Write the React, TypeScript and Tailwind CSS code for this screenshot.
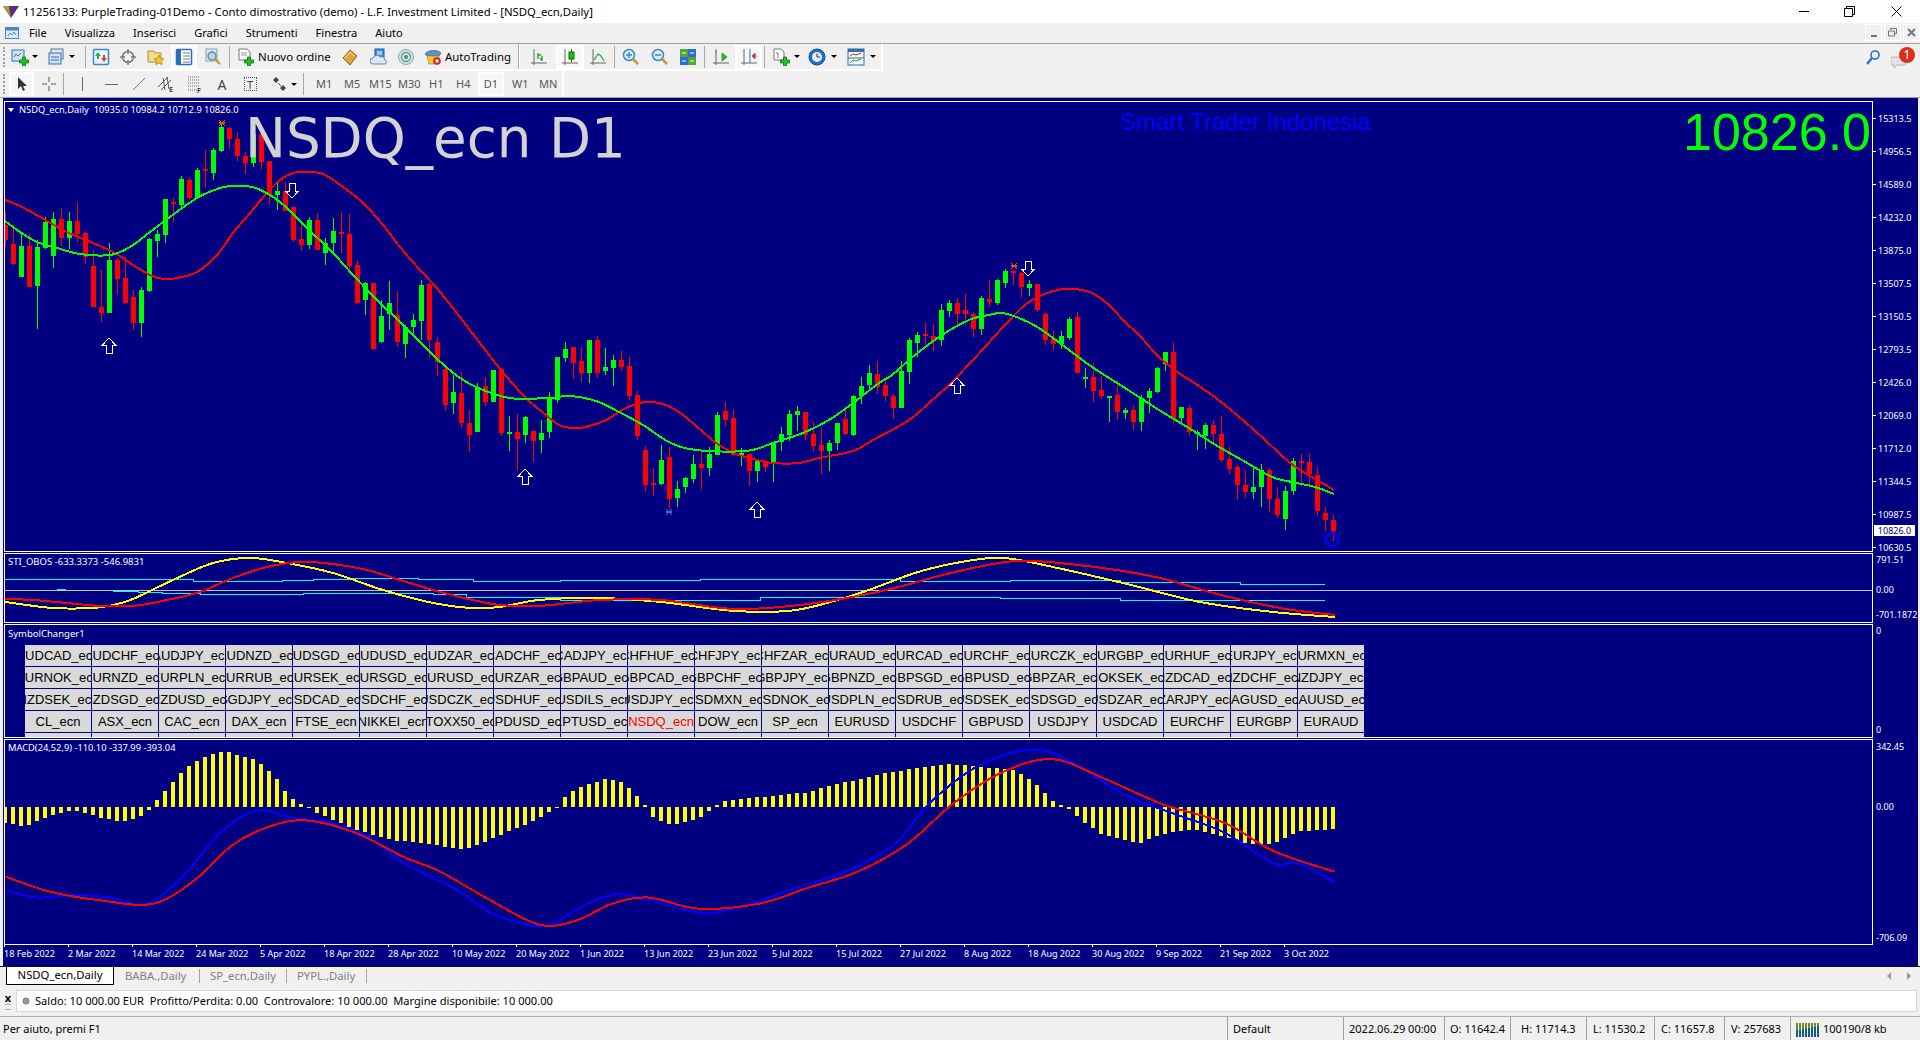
import type { ReactNode } from "react";

type Candle = [number, number, number, number, number];

// 1 = up candle, 0 = down candle; high, body top, body bottom, low
const firstCandles: Candle[] = [
    [0,335,375,420,440],[0,375,432,492,495],[1,395,438,530,530],[0,400,438,560,562],[1,420,441,557,686],[1,350,365,443,445],
    [1,335,357,467,503],[0,325,357,413,440],[1,335,363,413,445],[0,310,363,402,430],[0,395,400,472,490],[0,450,498,620,620],
    [0,510,621,638,665],[1,430,480,638,640],[0,475,480,537,585],[0,470,533,608,610],[0,570,591,670,690],[1,560,570,670,710],
    [1,415,417,573,578],[1,390,402,423,470],[1,297,297,404,428],[0,290,306,311,365],[1,228,237,315,325],[0,232,240,295,300],
    [1,205,210,295,295],[0,150,208,215,265],[1,145,150,218,240],[1,70,80,153,158],[0,80,84,116,145],[0,97,118,170,185],
    [0,155,168,189,220],[1,95,101,189,200],[0,95,101,185,205],[0,183,183,285,315],[1,245,273,285,330],[0,245,273,333,333],
    [0,320,322,420,425],[0,370,418,435,455],[1,350,361,435,445],[0,340,360,450,452],[1,415,430,461,495],[1,355,394,430,465],
    [0,337,397,401,460],[0,343,403,500,510],[0,480,495,608,612],[1,545,550,600,645],[0,548,550,747,750],[1,600,648,725,730],
    [1,543,610,643,690],[0,573,645,725,740],[1,675,680,732,775],[1,643,660,680,710],[1,540,555,663,720],[0,545,553,722,770],
];

const middleCandles: Candle[] = [
    [0,200,215,275,318],[0,285,297,405,422],[1,315,366,399,432],[0,307,369,459,476],[0,420,459,495,545],[1,340,354,486,486],
    [0,322,348,396,408],[1,300,300,396,396],[0,295,297,489,498],[1,438,486,489,543],[0,432,486,507,600],[1,438,441,495,519],
    [0,483,483,513,576],[1,450,489,510,549],[1,365,387,486,504],[1,261,261,390,399],[1,216,237,264,276],[0,231,231,279,327],
    [0,231,273,309,336],[1,210,210,309,339],[0,198,210,309,324],[1,234,291,303,315],[1,255,270,294,348],[0,243,270,291,303],
    [0,259,288,378,390],[0,364,375,498,510],[0,528,540,645,666],[0,594,639,645,678],[1,525,570,642,645],[0,531,561,687,720],
    [1,633,657,684,711],[1,621,624,651,669],[1,555,582,627,639],[0,540,582,594,657],[1,531,552,594,618],[1,426,435,555,555],
    [0,396,423,450,471],[0,417,444,555,558],[1,534,549,555,588],[0,549,552,603,648],[1,566,570,603,636],[0,570,573,591,606],
    [1,516,519,582,636],[1,471,492,516,543],[1,420,432,495,513],[1,408,423,435,483],[0,426,426,495,510],[0,456,492,528,546],
    [0,474,525,543,612],[1,510,519,543,603],[1,459,459,519,540],[0,414,447,492,495],[1,375,378,495,498],[1,321,348,378,402],
    [1,285,309,345,363],[0,273,312,351,372],[0,330,345,378,393],[0,372,378,414,447],[1,273,303,414,414],
];

const lastCandles: Candle[] = [
    [1,265,270,366,402],[1,247,255,279,321],[0,219,252,258,288],[0,222,258,273,303],[1,162,180,270,288],[1,150,159,183,201],
    [0,144,159,192,225],[0,132,180,192,222],[0,186,192,237,261],[1,138,144,237,255],[0,90,147,156,171],[1,87,90,159,165],
    [1,57,63,99,114],[0,60,63,69,105],[0,66,69,111,141],[1,90,102,114,138],[0,102,102,180,186],[0,186,192,270,285],
    [0,243,264,282,300],[1,243,258,282,297],[1,201,207,264,270],[0,186,201,369,369],[1,354,381,387,414],[0,339,381,423,456],
    [0,378,420,438,447],[1,438,438,441,516],[0,393,435,486,510],[1,474,480,489,507],[0,465,480,516,540],[1,435,444,516,543],
    [1,414,423,444,489],[1,351,354,426,429],[1,306,306,342,363],[0,279,306,507,519],[1,471,471,504,516],[0,465,474,546,558],
    [1,540,546,552,600],[1,519,525,558,597],[0,510,525,552,585],[0,498,552,630,636],[0,591,627,657,672],[0,645,651,705,750],
    [0,660,705,726,741],[1,654,711,726,747],[1,642,660,711,771],[0,654,660,747,786],[0,711,747,795,804],[1,708,723,807,840],
    [1,624,633,723,735],[0,612,633,639,708],[0,609,636,672,711],[0,651,675,783,798],[0,771,789,810,843],[0,795,810,843,873],
];

const toPage = (list: Candle[], offset: number): Candle[] =>
    list.map(([up, hi, top, bottom, lo]) => [up, offset + hi / 3, offset + top / 3, offset + bottom / 3, offset + lo / 3]);

const candles = [...toPage(firstCandles, 100), ...toPage(middleCandles, 270), ...toPage(lastCandles, 250)];

const slowMa = [5,200,20,206,40,217,67,232,93,243,115,253,133,265,150,275,163,279,177,278,197,272,217,255,233,233,250,213,267,193,280,180,293,173,307,172,323,174,343,187,363,203,383,225,400,247,420,270,436,287,456,312,476,338,501,370,526,398,546,415,559,425,573,428,586,427,606,420,626,408,646,402,666,405,683,415,703,432,719,445,736,454,753,459,773,463,799,463,819,458,853,451,873,440,892,430,912,418,929,403,952,382,985,347,1005,325,1025,305,1042,295,1062,289,1075,289,1092,293,1109,305,1125,322,1139,335,1159,357,1179,373,1202,388,1225,405,1245,422,1265,440,1289,462,1305,473,1334,490];
const fastMa = [5,221,20,232,37,242,57,248,80,254,110,255,130,247,150,232,170,217,197,198,220,188,233,186,252,187,270,195,287,208,307,228,333,253,353,275,377,300,400,322,423,345,436,358,456,375,476,387,509,398,549,398,569,396,596,401,619,412,643,425,669,442,696,450,746,451,773,443,803,433,829,420,853,403,879,383,892,375,915,355,942,335,969,320,989,315,1002,313,1019,318,1039,328,1065,347,1092,367,1125,388,1159,410,1192,430,1219,447,1242,460,1272,477,1292,482,1315,487,1334,494];

const stiYellow = [5,602,53,608,93,608,113,605,133,599,173,580,213,563,250,558,287,563,333,573,383,590,433,603,470,608,500,607,539,600,600,598,661,602,735,611,796,610,857,594,918,572,967,561,1004,558,1053,567,1127,584,1200,602,1273,612,1335,617];
const stiRed = [5,599,33,600,67,603,100,606,133,606,167,600,200,592,233,578,267,567,300,562,333,564,367,570,400,580,440,592,473,600,500,605,539,606,600,600,661,600,735,609,808,604,882,591,955,572,1016,561,1078,565,1151,576,1225,596,1286,609,1335,615];

// macd lines were read off the shrunk picture, so they get scaled up
const scale = (pts: number[]) => pts.map((v) => v * 1.2245);
const macdBlue = scale([5,727,30,733,60,731,90,733,120,738,150,715,180,680,210,662,240,668,270,672,300,683,330,705,370,725,400,745,430,755,450,755,480,738,505,730,530,735,570,745,600,742,650,725,690,712,730,690,760,655,800,625,845,612,880,625,920,650,960,665,1000,680,1040,705,1060,705,1090,720]);
const macdRed = scale([5,716,40,728,80,735,125,738,160,718,190,690,220,675,250,670,290,680,330,700,360,712,400,735,440,755,470,752,500,738,530,733,570,742,620,738,660,725,700,712,740,690,780,655,820,630,860,620,900,635,950,657,1000,672,1040,695,1090,712]);

const macdKeys = [[5,-13],[20,-16],[40,-8],[60,-2],[80,-8],[100,-12],[115,-8],[125,0],[130,8],[140,18],[150,30],[160,37],[170,42],[185,46],[195,42],[210,38],[225,25],[235,10],[245,3],[260,-5],[290,-18],[320,-27],[350,-30],[380,-35],[400,-27],[420,-18],[440,-10],[455,0],[465,12],[480,18],[495,23],[510,20],[525,5],[535,-10],[550,-15],[570,-10],[590,5],[620,8],[640,10],[660,12],[680,18],[700,22],[720,27],[750,32],[775,35],[800,33],[830,30],[845,20],[860,5],[875,-2],[885,-12],[900,-22],[930,-30],[950,-22],[975,-18],[1000,-24],[1020,-30],[1040,-30],[1060,-20],[1090,-18]];

function macdAt(x: number) {
    for (let k = 1; k < macdKeys.length; k++) {
        if (x <= macdKeys[k][0]) {
            const [x0, y0] = macdKeys[k - 1];
            const [x1, y1] = macdKeys[k];
            return y0 + ((y1 - y0) * Math.max(0, x - x0)) / (x1 - x0);
        }
    }
    return -18;
}

// catmull-rom through flat x,y pairs
function smooth(p: number[]) {
    let d = `M${p[0]} ${p[1]}`;
    for (let i = 0; i < p.length - 2; i += 2) {
        const x0 = i ? p[i - 2] : p[i];
        const y0 = i ? p[i - 1] : p[i + 1];
        const x3 = i + 4 < p.length ? p[i + 4] : p[i + 2];
        const y3 = i + 4 < p.length ? p[i + 5] : p[i + 3];
        d += `C${p[i] + (p[i + 2] - x0) / 6} ${p[i + 1] + (p[i + 3] - y0) / 6} ${p[i + 2] - (x3 - p[i]) / 6} ${p[i + 3] - (y3 - p[i + 1]) / 6} ${p[i + 2]} ${p[i + 3]}`;
    }
    return d;
}

const row1 = ["AUDCAD","AUDCHF","AUDJPY","AUDNZD","AUDSGD","AUDUSD","AUDZAR","CADCHF","CADJPY","CHFHUF","CHFJPY","CHFZAR","EURAUD","EURCAD","EURCHF","EURCZK","EURGBP","EURHUF","EURJPY","EURMXN"];
const row2 = ["EURNOK","EURNZD","EURPLN","EURRUB","EURSEK","EURSGD","EURUSD","EURZAR","GBPAUD","GBPCAD","GBPCHF","GBPJPY","GBPNZD","GBPSGD","GBPUSD","GBPZAR","NOKSEK","NZDCAD","NZDCHF","NZDJPY"];
const row3 = ["NZDSEK","NZDSGD","NZDUSD","SGDJPY","USDCAD","USDCHF","USDCZK","USDHUF","USDILS","USDJPY","USDMXN","USDNOK","USDPLN","USDRUB","USDSEK","USDSGD","USDZAR","ZARJPY","XAGUSD","XAUUSD"];
const row4 = ["CL_ecn","ASX_ecn","CAC_ecn","DAX_ecn","FTSE_ecn","NIKKEI_ecn","STOXX50_ecn","XPDUSD_ecn","XPTUSD_ecn","NSDQ_ecn","DOW_ecn","SP_ecn","EURUSD","USDCHF","GBPUSD","USDJPY","USDCAD","EURCHF","EURGBP","EURAUD"];
const symbols = [...row1, ...row2, ...row3].map((s) => `${s}_ecn`).concat(row4);

const prices = ["15313.5","14956.5","14589.0","14232.0","13875.0","13507.5","13150.5","12793.5","12426.0","12069.0","11712.0","11344.5","10987.5","10630.5"];
const dates = ["18 Feb 2022","2 Mar 2022","14 Mar 2022","24 Mar 2022","5 Apr 2022","18 Apr 2022","28 Apr 2022","10 May 2022","20 May 2022","1 Jun 2022","13 Jun 2022","23 Jun 2022","5 Jul 2022","15 Jul 2022","27 Jul 2022","8 Aug 2022","18 Aug 2022","30 Aug 2022","9 Sep 2022","21 Sep 2022","3 Oct 2022"];

const Plus = ({ x = 9, y = 9 }: { x?: number; y?: number }) => (
    <path d={`M${x + 2.5} ${y}h3v3h3v3h-3v3h-3v-3h-3v-3h3z`} fill="#22c322" stroke="#0b6b12" strokeWidth="0.8" />
);

const Icon = ({ children }: { children: ReactNode }) => (
    <svg width="18" height="18" viewBox="0 0 18 18" className="shrink-0">{children}</svg>
);

const Dropdown = () => (
    <div className="flex w-[8px] justify-center">
        <div className="h-0 w-0 border-x-[3px] border-t-[3px] border-x-transparent border-t-black" />
    </div>
);

const Sep = () => <div className="mx-[2px] h-[22px] w-px shrink-0 bg-[#a8a8a8]" />;

const Btn = ({ className, active, children }: { className: string; active?: boolean; children: ReactNode }) => (
    <div className={`flex h-[24px] shrink-0 items-center justify-center ${active ? "border-2 border-white bg-[#f7f7f7]" : ""} ${className}`}>
        {children}
    </div>
);

const Grip = () => (
    <div className="mx-[3px] h-[20px] w-[2px] shrink-0 border-l-2 border-dotted border-[#a0a0a0]" />
);

const UpArrow = ({ x, y }: { x: number; y: number }) => (
    <path d={`M${x} ${y}l6.5 7h-3.5v8h-6v-8h-3.5z`} fill="#000080" stroke="#fff" strokeWidth="1" />
);

const DownArrow = ({ x, y }: { x: number; y: number }) => (
    <path d={`M${x} ${y}l6.5 -7h-3.5v-8h-6v8h-3.5z`} fill="#000080" stroke="#fff" strokeWidth="1" />
);

const Cross = ({ x, y, color }: { x: number; y: number; color: string }) => (
    <path d={`M${x - 3} ${y - 3}l6 6M${x + 3} ${y - 3}l-6 6M${x - 3} ${y}h6`} stroke={color} strokeWidth="1.2" fill="none" />
);

const MainChart = () => (
    <svg viewBox="5 102 1867 449" className="absolute inset-0 h-full w-full" shapeRendering="crispEdges">
        {candles.map(([up, hi, top, bottom, lo], i) => {
            const color = up ? "#00ff00" : "#ff0000";
            const left = 3 + 8 * i;
            return (
                <g key={i} fill={color}>
                    <rect x={left + 2} y={Math.round(hi)} width="1" height={Math.round(lo - hi)} />
                    <rect x={left} y={Math.round(top)} width="5" height={Math.max(2, Math.round(bottom - top))} />
                </g>
            );
        })}
        <path d={smooth(slowMa)} fill="none" stroke="#ff0000" strokeWidth="2" />
        <path d={smooth(fastMa)} fill="none" stroke="#00ff00" strokeWidth="2" />
        <UpArrow x={109} y={338} />
        <UpArrow x={525} y={469} />
        <UpArrow x={757} y={502} />
        <UpArrow x={957} y={378} />
        <DownArrow x={292} y={198} />
        <DownArrow x={1028} y={276} />
        <Cross x={222} y={123} color="#ff4500" />
        <Cross x={669} y={512} color="#4169e1" />
        <Cross x={1014} y={266} color="#ff4500" />
        <circle cx="1332" cy="540" r="6.5" fill="none" stroke="#0000ff" strokeWidth="2" />
        <circle cx="1332" cy="540" r="1.5" fill="#0000ff" />
    </svg>
);

const StiChart = () => (
    <svg viewBox="5 554 1867 68" className="absolute inset-0 h-full w-full" shapeRendering="crispEdges">
        <path d="M5 590H1872" stroke="#c0c0c0" strokeWidth="1" />
        <path d="M5 579H193V581H282V580H313V579H353V578H418V579H473V581H560V580H700V579H900V581H1010V580H1120V582H1240V584H1325" fill="none" stroke="#00ffff" strokeWidth="1" />
        <path d="M113 591H138V592H162V593H200V594H303V593H433V594H466V597H560V600H760V597H1000V598H1120V600H1325" fill="none" stroke="#00ffff" strokeWidth="1" />
        <path d="M57 589H66" stroke="#00ffff" strokeWidth="1" />
        <path d={smooth(stiYellow)} fill="none" stroke="#ffff00" strokeWidth="2" />
        <path d={smooth(stiRed)} fill="none" stroke="#ff0000" strokeWidth="2" />
    </svg>
);

const MacdChart = () => (
    <svg viewBox="5 740 1867 204" className="absolute inset-0 h-full w-full" shapeRendering="crispEdges">
        {candles.map((_, i) => {
            const left = 3 + 8 * i;
            const h = Math.round(macdAt((left + 2.5) / 1.2245) * 1.2245);
            return <rect key={i} x={left} y={h > 0 ? 807 - h : 807} width="4" height={Math.max(1, Math.abs(h))} fill="#ffff00" />;
        })}
        <path d={smooth(macdBlue)} fill="none" stroke="#0000ff" strokeWidth="2" />
        <path d={smooth(macdRed)} fill="none" stroke="#ff0000" strokeWidth="2" />
    </svg>
);

const Toolbars = () => (
    <div className="h-[53px] bg-[#f0f0f0] text-[11.4px] text-black">
        <div className="flex h-[27px] w-[883px] items-center border-r-2 border-b-2 border-white">
            <Grip />
            <Btn className="ml-px w-[22px]">
                <Icon><rect x="1" y="2" width="12" height="11" fill="#cfe3f7" stroke="#3b6ea8" /><path d="M3 9l2-3 2 2 3-3" fill="none" stroke="#3b6ea8" /><Plus /></Icon>
            </Btn>
            <Dropdown />
            <Btn className="ml-[7px] w-[22px]">
                <Icon><rect x="3" y="1" width="12" height="10" fill="#dbe8f6" stroke="#52709a" /><rect x="1" y="5" width="12" height="11" fill="#cfe0f4" stroke="#3b6ea8" /><path d="M3 9h8M3 12h8" stroke="#3b6ea8" /></Icon>
            </Btn>
            <Dropdown />
            <div className="ml-[7px]"><Sep /></div>
            <Btn className="w-[26px]">
                <Icon><rect x="1.5" y="1.5" width="15" height="15" rx="1" fill="#eef5fb" stroke="#3d86c6" strokeWidth="1.5" /><path d="M6 4l3 4H7v3H5V8H3z" fill="#22b14c" /><path d="M12 14l-3-4h2V7h2v3h2z" fill="#e0442a" /></Icon>
            </Btn>
            <Btn className="w-[28px]">
                <Icon><circle cx="9" cy="9" r="5.5" fill="none" stroke="#777" strokeWidth="1.5" /><path d="M9 1v5M9 12v5M1 9h5M12 9h5" stroke="#777" strokeWidth="1.4" /></Icon>
            </Btn>
            <Btn className="w-[28px]">
                <Icon><path d="M1 3h6l1 2h6v9H1z" fill="#f5dc8c" stroke="#a98a3a" /><path d="M12 7l1.7 3.4 3.3.5-2.5 2.3.6 3.5-3.1-1.7-3.1 1.7.6-3.5L7 10.900l3.300-.5z" fill="#f3c623" stroke="#a07a10" strokeWidth="0.7" /></Icon>
            </Btn>
            <Btn className="mx-px w-[26px]" active>
                <Icon><rect x="1.500" y="1.500" width="15" height="15" rx="1" fill="#fff" stroke="#2a6fb4" strokeWidth="1.500" /><rect x="2" y="2" width="4" height="14" fill="#2a6fb4" /><path d="M8 5h7M8 8h7M8 11h7M8 14h7" stroke="#6a7a8c" /></Icon>
            </Btn>
            <Btn className="w-[29px]">
                <Icon><rect x="2" y="1" width="11" height="12" fill="#dce6f2" stroke="#8a9bb3" /><circle cx="8" cy="8" r="4" fill="#b8d3ea" stroke="#5d7fa5" strokeWidth="1.300" /><path d="M11 11l5 5" stroke="#c49a2c" strokeWidth="2.200" /></Icon>
            </Btn>
            <Sep />
            <div className="ml-[4px] flex h-[24px] w-[95px] shrink-0 items-center gap-[4px]">
                <Icon><path d="M3 1h8l3 3v8H3z" fill="#fff" stroke="#777" /><path d="M5 5h6M5 7h6" stroke="#999" /><Plus /></Icon>
                <span className="whitespace-nowrap">Nuovo ordine</span>
            </div>
            <Btn className="ml-[5px] w-[28px]">
                <Icon><path d="M2 10l7-8 7 6-7 9z" fill="#d9a441" stroke="#8c6414" /><path d="M4 10l5-6 4 4" fill="none" stroke="#f4dc9a" /></Icon>
            </Btn>
            <Btn className="ml-px w-[28px]">
                <Icon><rect x="5" y="1" width="9" height="10" fill="#3f8fd8" stroke="#1f5d9e" /><path d="M7 4h5M7 6h5" stroke="#fff" /><path d="M3 16a3 3 0 010-6 4 4 0 017-1 3.500 3.500 0 015 3 2 2 0 01-1 4z" fill="#dbe7f3" stroke="#6b86a3" /></Icon>
            </Btn>
            <Btn className="w-[26px]">
                <Icon><circle cx="9" cy="9" r="7.500" fill="#cfe5e2" stroke="#8aa7b5" /><circle cx="9" cy="9" r="4.500" fill="none" stroke="#5d9c9a" strokeWidth="1.300" /><circle cx="9" cy="9" r="2" fill="#3aa24a" /></Icon>
            </Btn>
            <div className="ml-[5px] flex h-[24px] w-[92px] shrink-0 items-center gap-[3px]">
                <Icon><path d="M1 6c2-4 13-5 16-1l-2 3H3z" fill="#5f8fc4" stroke="#345f8f" strokeWidth="0.700" /><path d="M3 8h12l-1 8H5z" fill="#f0c53a" stroke="#a98a1a" strokeWidth="0.700" /><circle cx="13" cy="13" r="3.800" fill="#d81e1e" /><rect x="11.500" y="11.500" width="3" height="3" fill="#fff" /></Icon>
                <span className="whitespace-nowrap">AutoTrading</span>
            </div>
            <div className="ml-[2px] mr-[2px] h-[25px] w-[2px] shrink-0 border-l border-[#a8a8a8] bg-white" />
            <Btn className="ml-[3px] w-[28px]">
                <Icon><path d="M4 1v16M1 15h16" stroke="#666" /><path d="M8 11V5M8 7h3M12 13V8M10 11h2" stroke="#12a12a" strokeWidth="1.300" /></Icon>
            </Btn>
            <Btn className="ml-[3px] w-[28px]" active>
                <Icon><path d="M4 1v16M1 15h16" stroke="#666" /><rect x="8" y="4" width="5" height="7" fill="#14c414" stroke="#0a700a" /><path d="M10.500 1v3M10.500 11v3" stroke="#0a700a" /></Icon>
            </Btn>
            <Btn className="w-[28px]">
                <Icon><path d="M4 1v16M1 15h16" stroke="#666" /><path d="M5 12l4-6 3 2 3 5" fill="none" stroke="#14a14a" strokeWidth="1.200" /></Icon>
            </Btn>
            <Sep />
            <Btn className="w-[28px]">
                <Icon><circle cx="7" cy="7" r="5.500" fill="#d8ecfa" stroke="#3d86c6" strokeWidth="1.500" /><path d="M4 7h6M7 4v6" stroke="#3d86c6" strokeWidth="1.500" /><path d="M11 11l5 5" stroke="#c49a2c" strokeWidth="2.500" /></Icon>
            </Btn>
            <Btn className="ml-px w-[28px]">
                <Icon><circle cx="7" cy="7" r="5.500" fill="#d8ecfa" stroke="#3d86c6" strokeWidth="1.500" /><path d="M4 7h6" stroke="#3d86c6" strokeWidth="1.500" /><path d="M11 11l5 5" stroke="#c49a2c" strokeWidth="2.500" /></Icon>
            </Btn>
            <Btn className="w-[28px]">
                <Icon><rect x="1" y="1" width="8" height="8" fill="#4ea72e" /><rect x="9" y="1" width="8" height="8" fill="#2f6ed1" /><rect x="1" y="9" width="8" height="8" fill="#2f6ed1" /><rect x="9" y="9" width="8" height="8" fill="#4ea72e" /><path d="M3 5h4M11 5h4M3 13h4M11 13h4" stroke="#fff" /></Icon>
            </Btn>
            <Sep />
            <Btn className="w-[28px]">
                <Icon><path d="M4 1v16M1 15h16" stroke="#666" /><path d="M4 3v2M10 5l5 4-5 4z" fill="#22c322" stroke="#0b6b12" strokeWidth="0.600" /></Icon>
            </Btn>
            <Btn className="w-[27px]" active>
                <Icon><path d="M4 1v16M1 15h16" stroke="#666" /><path d="M10 1v14" stroke="#2a6fb4" /><path d="M17 8h-5M12 8l3-3v6z" fill="#c0392b" stroke="#c0392b" strokeWidth="0.800" /></Icon>
            </Btn>
            <Sep />
            <Btn className="ml-[2px] w-[24px]">
                <Icon><path d="M2 1h7l3 3v8H2z" fill="#fff" stroke="#777" /><path d="M4 5h2v5" fill="none" stroke="#777" /><Plus /></Icon>
            </Btn>
            <Dropdown />
            <Btn className="ml-[3px] w-[26px]">
                <Icon><circle cx="9" cy="9" r="8" fill="#1a73c8" stroke="#0d4f91" /><circle cx="9" cy="9" r="5" fill="#e8eef4" /><path d="M9 5.500V9h3" fill="none" stroke="#334" /></Icon>
            </Btn>
            <Dropdown />
            <Btn className="ml-[5px] w-[26px]">
                <Icon><rect x="1" y="1" width="16" height="16" fill="#f4f8fb" stroke="#2f6ea8" /><rect x="1" y="1" width="16" height="3" fill="#2f6ea8" /><path d="M3 8l3-2 3 1 5-2" fill="none" stroke="#b5341f" /><path d="M1 10h16" stroke="#2f6ea8" /><path d="M3 15l3-3 3 1 5-2" fill="none" stroke="#2c8f3c" /></Icon>
            </Btn>
            <Dropdown />
        </div>
        <div className="flex h-[26px] items-center">
            <div className="flex h-full w-[564px] shrink-0 items-center border-r-2 border-white text-[11px] text-[#555]">
                <Grip />
                <Btn className="ml-px w-[25px]" active>
                    <svg width="12" height="16" viewBox="0 0 12 16"><path d="M2 1v12l3-3 2 5 2-1-2-4h4z" fill="#333" /></svg>
                </Btn>
                <Btn className="ml-[3px] w-[24px]">
                    <svg width="16" height="16" viewBox="0 0 16 16"><path d="M8 1v5M8 10v5M1 8h5M10 8h5" stroke="#555" /></svg>
                </Btn>
                <Sep />
                <Btn className="ml-[2px] w-[28px]"><div className="h-[14px] w-px bg-[#666]" /></Btn>
                <Btn className="ml-[5px] w-[20px]"><div className="h-px w-[13px] bg-[#666]" /></Btn>
                <Btn className="ml-[8px] w-[20px]">
                    <svg width="14" height="14" viewBox="0 0 14 14"><path d="M1 13L13 1" stroke="#777" /></svg>
                </Btn>
                <Btn className="ml-[6px] w-[22px]">
                    <svg width="18" height="18" viewBox="0 0 18 18"><path d="M1 12L11 2M4 15L14 5M6 3l2 12M10 2l2 12" stroke="#555" fill="none" /><text x="12" y="17" fontSize="7" fontWeight="700" fill="#444">E</text></svg>
                </Btn>
                <Btn className="ml-[8px] w-[20px]">
                    <svg width="16" height="18" viewBox="0 0 16 18"><path d="M1 2h12M1 5h12M1 8h12M1 11h12M1 15h9" stroke="#666" strokeDasharray="1 1" /><text x="10" y="18" fontSize="7" fontWeight="700" fill="#444">F</text></svg>
                </Btn>
                <Btn className="ml-[6px] w-[22px]"><span className="text-[14px] text-[#444]">A</span></Btn>
                <Btn className="ml-[6px] w-[22px]">
                    <div className="flex h-[14px] w-[13px] items-center justify-center border border-dotted border-[#555] text-[11px] leading-none text-[#444]">T</div>
                </Btn>
                <Btn className="ml-[7px] w-[22px]">
                    <svg width="16" height="16" viewBox="0 0 16 16"><path d="M5 1l3 3-3 3-3-3zM12 9l3 3-3 3-3-3z" fill="#444" /><path d="M7 7l3 3" stroke="#444" /></svg>
                </Btn>
                <Dropdown />
                <div className="ml-[3px]"><Sep /></div>
                <div className="ml-[10px] w-[28px] shrink-0">M1</div>
                <div className="w-[25px] shrink-0">M5</div>
                <div className="w-[29px] shrink-0">M15</div>
                <div className="w-[31px] shrink-0">M30</div>
                <div className="w-[27px] shrink-0">H1</div>
                <div className="w-[22px] shrink-0">H4</div>
                <Btn className="w-[26px]" active>D1</Btn>
                <div className="ml-[8px] w-[27px] shrink-0">W1</div>
                <div className="shrink-0">MN</div>
            </div>
        </div>
    </div>
);

const SymbolGrid = () => (
    <div className="ml-[20px] mt-[8px] grid grid-cols-[repeat(20,67px)] auto-rows-[22px] font-['Liberation_Sans',sans-serif] text-[13px] text-black">
        {symbols.map((s) => (
            <button
                key={s}
                className={`flex items-center justify-center overflow-hidden whitespace-nowrap border-r border-b border-[#000080] bg-[#d9d9d9] ${s === "NSDQ_ecn" ? "text-[#ff0000]" : ""}`}
            >
                <span className="shrink-0">{s}</span>
            </button>
        ))}
        {row1.map((s) => <div key={s} className="border-r border-[#000080] bg-[#d9d9d9]" />)}
    </div>
);

const Tick = () => <div className="h-px w-[3px] shrink-0 bg-white" />;

export default function App() {
    return (
        <div className="flex h-[1040px] w-[1920px] flex-col overflow-hidden bg-[#f0f0f0] font-['Noto_Sans',sans-serif]">
            {/* window title */}
            <div className="flex h-[23px] items-center bg-white text-[11.35px] text-black">
                <svg width="18" height="14" viewBox="0 0 18 14" className="ml-[2px]">
                    <path d="M1 1h16L9 13z" fill="#5b2a86" />
                    <path d="M1 1h6l2 12z" fill="#a39a3a" />
                </svg>
                <span className="ml-[3px] whitespace-nowrap">11256133: PurpleTrading-01Demo - Conto dimostrativo (demo) - L.F. Investment Limited - [NSDQ_ecn,Daily]</span>
                <div className="ml-auto flex items-center">
                    <div className="flex w-[46px] justify-center"><div className="h-px w-[10px] bg-black" /></div>
                    <div className="flex w-[45px] justify-center">
                        <svg width="11" height="11" viewBox="0 0 11 11"><path d="M2.500 2.500V.5h8v8h-2M.5 2.500h8v8h-8z" fill="none" stroke="#000" /></svg>
                    </div>
                    <div className="flex w-[48px] justify-center">
                        <svg width="11" height="11" viewBox="0 0 11 11"><path d="M.5.5l10 10M10.500.5l-10 10" stroke="#000" /></svg>
                    </div>
                </div>
            </div>

            {/* menu bar */}
            <div className="flex h-[20px] items-center text-[11.1px] text-black">
                <svg width="14" height="14" viewBox="0 0 14 14" className="ml-[5px]">
                    <rect x="0.500" y="1.500" width="13" height="11" fill="#dcebf8" stroke="#4d86bf" />
                    <rect x="0.500" y="1.500" width="13" height="3" fill="#4d86bf" />
                    <path d="M3 10l2-3 2 2 2-3 2 3" fill="none" stroke="#4d86bf" />
                </svg>
                <div className="ml-[10px] flex gap-[18px]">
                    <span>File</span>
                    <span>Visualizza</span>
                    <span>Inserisci</span>
                    <span>Grafici</span>
                    <span>Strumenti</span>
                    <span>Finestra</span>
                    <span>Aiuto</span>
                </div>
                <div className="ml-auto flex h-[18px] gap-[2px] self-start pt-px">
                    <div className="flex h-[17px] w-[17px] items-end justify-center border border-white pb-[3px]"><div className="h-[2px] w-[6px] bg-[#6a7480]" /></div>
                    <div className="flex h-[17px] w-[17px] items-center justify-center border border-white">
                        <svg width="9" height="9" viewBox="0 0 9 9"><path d="M2.500 2V.5h6v5H7M.5 3h6v5h-6z" fill="none" stroke="#6a7480" /></svg>
                    </div>
                    <div className="flex h-[17px] w-[17px] items-center justify-center border border-white">
                        <svg width="9" height="9" viewBox="0 0 9 9"><path d="M1 1l7 7M8 1l-7 7" stroke="#6a7480" strokeWidth="1.800" /></svg>
                    </div>
                </div>
            </div>
            <div className="h-px bg-[#a0a0a0]" />

            <div className="relative">
                <Toolbars />
                <div className="absolute right-[5px] top-[3px] flex items-center gap-[10px]">
                    <svg width="16" height="18" viewBox="0 0 16 18"><circle cx="10" cy="6" r="4" fill="#e8f2fb" stroke="#2f6ec4" strokeWidth="1.600" /><path d="M7 9l-5 6" stroke="#2f6ec4" strokeWidth="2.400" /></svg>
                    <div className="relative h-[22px] w-[24px]">
                        <svg width="16" height="14" viewBox="0 0 16 14" className="absolute bottom-0 left-0"><path d="M2 2h11a2 2 0 012 2v4a2 2 0 01-2 2H6l-3 3V10H2a2 2 0 01-2-2V4a2 2 0 012-2z" fill="#e4e4e4" stroke="#b5b5b5" /></svg>
                        <div className="absolute right-0 top-0 flex h-[16px] w-[16px] items-center justify-center rounded-full bg-[#d8301c] text-[12px] leading-none text-white">1</div>
                    </div>
                </div>
            </div>
            <div className="h-px bg-[#a0a0a0]" />

            {/* chart window */}
            <div className="ml-[3px] mr-[2px] h-[868px] shrink-0 bg-[#000080] pl-px pt-[3px] text-[9px] leading-[14px] text-white">
                <div className="flex h-[451px]">
                    <div className="relative w-[1869px] shrink-0 overflow-hidden border border-white">
                        <MainChart />
                        <div className="absolute left-[3px] top-[1px] flex items-center gap-[5px] whitespace-nowrap text-[9.3px]">
                            <div className="h-0 w-0 border-x-[3.500px] border-t-[4px] border-x-transparent border-t-white" />
                            <span>NSDQ_ecn,Daily&nbsp;&nbsp;10935.0 10984.2 10712.9 10826.0</span>
                        </div>
                        <div className="absolute left-[240px] top-[5px] whitespace-nowrap font-['DejaVu_Sans',sans-serif] text-[54.7px] leading-[62px] text-[#d3d3d3]">NSDQ_ecn D1</div>
                        <div className="absolute left-[1115px] top-[6px] whitespace-nowrap font-['Liberation_Sans',sans-serif] text-[24px] leading-[28px] text-[#0000ff]">Smart Trader Indonesia</div>
                        <div className="absolute right-[1px] top-0 whitespace-nowrap font-['Liberation_Sans',sans-serif] text-[52px] leading-[60px] text-[#00ff00]">10826.0</div>
                    </div>
                    <div className="relative w-[46px] shrink-0 pt-[1px]">
                        {prices.map((p) => (
                            <div key={p} className="flex h-[33px] items-center gap-[2px]">
                                <Tick />
                                <span>{p}</span>
                            </div>
                        ))}
                        <div className="absolute left-[1px] top-[424px] flex h-[11px] w-[41px] items-center justify-center bg-white leading-none text-[#000080]">10826.0</div>
                    </div>
                </div>

                <div className="mt-px flex h-[70px]">
                    <div className="relative w-[1869px] shrink-0 overflow-hidden border border-white">
                        <StiChart />
                        <div className="absolute left-[3px] top-px whitespace-nowrap text-[9.5px]">STI_OBOS -633.3373 -546.9831</div>
                    </div>
                    <div className="w-[46px] shrink-0 pl-[3px]">
                        <div className="h-[30px]">791.51</div>
                        <div className="h-[25px]">0.00</div>
                        <div>-701.1872</div>
                    </div>
                </div>

                <div className="mt-px flex h-[114px]">
                    <div className="relative w-[1869px] shrink-0 overflow-hidden border border-white">
                        <div className="absolute left-[3px] top-[2px] whitespace-nowrap text-[9.5px]">SymbolChanger1</div>
                        <div className="pt-[12px]"><SymbolGrid /></div>
                    </div>
                    <div className="w-[46px] shrink-0 pl-[3px]">
                        <div className="h-[99px]">0</div>
                        <div>0</div>
                    </div>
                </div>

                <div className="mt-px flex h-[206px]">
                    <div className="relative w-[1869px] shrink-0 overflow-hidden border border-white">
                        <MacdChart />
                        <div className="absolute left-[3px] top-px whitespace-nowrap text-[9.3px]">MACD(24,52,9) -110.10 -337.99 -393.04</div>
                    </div>
                    <div className="w-[46px] shrink-0 pl-[3px] pt-px">
                        <div className="h-[60px]">342.45</div>
                        <div className="h-[131px]">0.00</div>
                        <div>-706.09</div>
                    </div>
                </div>

                {/* time scale */}
                <div className="flex h-[21px]">
                    {dates.map((d) => (
                        <div key={d} className="w-[64px] shrink-0 whitespace-nowrap">
                            <div className="h-[2px] w-px bg-white" />
                            <div>{d}</div>
                        </div>
                    ))}
                </div>
            </div>

            {/* chart tabs */}
            <div className="flex h-[22px] items-start border-t border-[#111] pl-[6px] text-[11.3px] text-[#808080]">
                <div className="flex h-[18px] w-[108px] items-center justify-center border-x border-b border-black bg-white text-black">NSDQ_ecn,Daily</div>
                <div className="flex h-[18px] items-center">
                    <span className="ml-[11px] w-[74px]">BABA.,Daily</span>
                    <div className="h-[14px] w-px bg-[#a0a0a0]" />
                    <span className="ml-[10px] w-[76px]">SP_ecn,Daily</span>
                    <div className="h-[14px] w-px bg-[#a0a0a0]" />
                    <span className="ml-[10px] w-[69px]">PYPL.,Daily</span>
                    <div className="h-[14px] w-px bg-[#a0a0a0]" />
                </div>
                <div className="ml-auto flex h-[18px] items-center gap-[16px] pr-[9px]">
                    <div className="h-0 w-0 border-y-[4px] border-r-[4px] border-y-transparent border-r-[#999]" />
                    <div className="h-0 w-0 border-y-[4px] border-l-[4px] border-y-transparent border-l-[#999]" />
                </div>
            </div>

            {/* trade panel */}
            <div className="flex h-[26px] items-center pr-[3px] text-[11.1px] text-black">
                <div className="flex w-[16px] flex-col items-center font-bold leading-none">
                    <span className="text-[11px]">x</span>
                    <div className="mt-px h-[6px] w-[6px] border-y border-[#aaa]" />
                </div>
                <div className="flex h-[22px] flex-1 items-center gap-[5px] border border-[#d8d8d8] bg-white pl-[5px]">
                    <svg width="8" height="8" viewBox="0 0 8 8"><circle cx="4" cy="4" r="3" fill="#999" stroke="#777" /></svg>
                    <span className="whitespace-pre">Saldo: 10 000.00 EUR  Profitto/Perdita: 0.00  Controvalore: 10 000.00  Margine disponibile: 10 000.00</span>
                </div>
            </div>
            <div className="mt-[2px] h-px bg-[#b0b0b0]" />

            {/* status bar */}
            <div className="flex flex-1 items-center text-[11px] text-black">
                <div className="w-[1227px] shrink-0 pl-[3px] pt-[2px]">Per aiuto, premi F1</div>
                <div className="flex h-full w-[116px] shrink-0 items-center border-l border-[#a0a0a0] pl-[5px] pt-[2px]">Default</div>
                <div className="flex h-full w-[101px] shrink-0 items-center whitespace-nowrap border-l border-[#a0a0a0] pl-[5px] pt-[2px]">2022.06.29 00:00</div>
                <div className="flex h-full w-[66px] shrink-0 items-center whitespace-nowrap border-l border-[#a0a0a0] pl-[5px] pt-[2px]">O: 11642.4</div>
                <div className="flex h-full w-[76px] shrink-0 items-center whitespace-nowrap border-l border-[#a0a0a0] pl-[10px] pt-[2px]">H: 11714.3</div>
                <div className="flex h-full w-[68px] shrink-0 items-center whitespace-nowrap border-l border-[#a0a0a0] pl-[6px] pt-[2px]">L: 11530.2</div>
                <div className="flex h-full w-[70px] shrink-0 items-center whitespace-nowrap border-l border-[#a0a0a0] pl-[6px] pt-[2px]">C: 11657.8</div>
                <div className="flex h-full w-[66px] shrink-0 items-center whitespace-nowrap border-l border-[#a0a0a0] pl-[6px] pt-[2px]">V: 257683</div>
                <div className="flex h-full flex-1 items-center gap-[4px] whitespace-nowrap border-l border-[#a0a0a0] pl-[5px] pt-[2px]">
                    <svg width="23" height="14" viewBox="0 0 23 14">
                        {[0, 1, 2, 3, 4, 5, 6, 7].map((b) => (
                            <g key={b}>
                                <rect x={b * 3} y={0} width="2" height={7 - b * 0.6} fill="#6b8e23" />
                                <rect x={b * 3} y={7 - b * 0.6} width="2" height={7 + b * 0.6} fill="#155a78" />
                            </g>
                        ))}
                    </svg>
                    <span>100190/8 kb</span>
                </div>
            </div>
        </div>
    );
}
